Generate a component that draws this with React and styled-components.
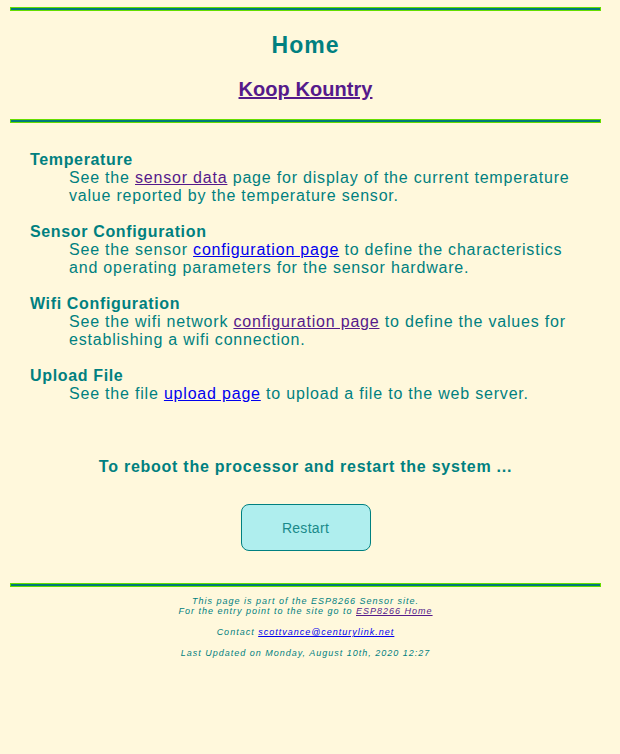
import React from 'react'
import styled, {createGlobalStyle} from 'styled-components'

const Global = createGlobalStyle`
  html, body {
    margin: 0;
    background: #fff8dc;
  }
  body {
    font-family: "Liberation Sans", Arial, sans-serif;
    color: #008080;
  }
`

const Page = styled.div`
  padding: 7px 19px 40px 10px;
`

const Rule = styled.div`
  height: 2px;
  border: 1px solid #66dd00;
  background: #007a7a;
`

const Header = styled.header`
  display: flex;
  flex-direction: column;
  align-items: center;
  padding: 21px 0 18px;
`

const Title = styled.h1`
  margin: 0;
  font-size: 23px;
  line-height: 26px;
  font-weight: bold;
  letter-spacing: 1px;
`

const SiteLink = styled.a`
  margin-top: 19px;
  font-size: 20px;
  line-height: 24px;
  font-weight: bold;
  color: #551a8b;
  letter-spacing: 0.05px;
`

const List = styled.dl`
  margin: 28px 0 0 20px;
  display: flex;
  flex-direction: column;
  gap: 18px;
`

const Item = styled.div``

const Term = styled.dt`
  font-size: 16px;
  line-height: 18px;
  font-weight: bold;
  letter-spacing: 0.65px;
`

// narrower right edge so lines wrap where the original does
const Desc = styled.dd`
  margin: 0 24px 0 39px;
  font-size: 16px;
  line-height: 18px;
  letter-spacing: 0.8px;
`

const Link = styled.a`
  color: ${props => props.$visited ? "#551a8b" : "#0000ee"};
`

const Reboot = styled.section`
  display: flex;
  flex-direction: column;
  align-items: center;
  margin-top: 55px;
`

const RebootText = styled.p`
  margin: 0;
  font-size: 16px;
  line-height: 18px;
  font-weight: bold;
  letter-spacing: 0.75px;
`

const Button = styled.button`
  margin-top: 28px;
  width: 130px;
  height: 47px;
  background: #afeeee;
  border: 1px solid #008080;
  border-radius: 8px;
  font-family: "Liberation Sans", Arial, sans-serif;
  font-size: 14px;
  color: #1a8a8a;
  letter-spacing: 0.3px;
`

const Footer = styled.footer`
  margin-top: 32px;
`

const FootText = styled.p`
  margin: ${props => props.$tight ? "0" : "11px 0 0"};
  text-align: center;
  font-size: 9px;
  line-height: 10px;
  font-style: italic;
  letter-spacing: 1px;
`

const FootLines = styled.div`
  margin-top: 9px;
`

export default function App() {
  return (
    <Page>
      <Global />
      <Rule />
      <Header>
        <Title>Home</Title>
        <SiteLink href="#">Koop Kountry</SiteLink>
      </Header>
      <Rule />
      <List>
        <Item>
          <Term>Temperature</Term>
          <Desc>See the <Link $visited href="#">sensor data</Link> page for display of the current temperature value reported by the temperature sensor.</Desc>
        </Item>
        <Item>
          <Term>Sensor Configuration</Term>
          <Desc>See the sensor <Link href="#">configuration page</Link> to define the characteristics and operating parameters for the sensor hardware.</Desc>
        </Item>
        <Item>
          <Term>Wifi Configuration</Term>
          <Desc>See the wifi network <Link $visited href="#">configuration page</Link> to define the values for establishing a wifi connection.</Desc>
        </Item>
        <Item>
          <Term>Upload File</Term>
          <Desc>See the file <Link href="#">upload page</Link> to upload a file to the web server.</Desc>
        </Item>
      </List>
      <Reboot>
        <RebootText>To reboot the processor and restart the system ...</RebootText>
        <Button>Restart</Button>
      </Reboot>
      <Footer>
        <Rule />
        <FootLines>
          <FootText $tight>This page is part of the ESP8266 Sensor site.</FootText>
          <FootText $tight>For the entry point to the site go to <Link $visited href="#">ESP8266 Home</Link></FootText>
          <FootText>Contact <Link href="#">scottvance@centurylink.net</Link></FootText>
          <FootText>Last Updated on Monday, August 10th, 2020 12:27</FootText>
        </FootLines>
      </Footer>
    </Page>
  )
}
